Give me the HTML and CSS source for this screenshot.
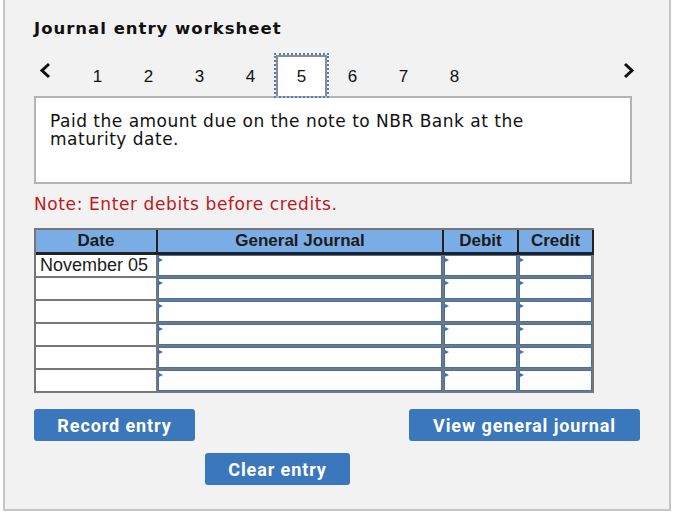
FILE: index.html
```html
<!DOCTYPE html>
<html>
<head>
    <title>Journal entry worksheet</title>
    <link rel="stylesheet" href="styles.css">
</head>
<body>
    <div class="panel">
        <h2 class="title">Journal entry worksheet</h2>

        <div class="pager">
            <span class="chevron prev">
                <svg width="12" height="17" viewBox="0 0 12 17"><polyline points="10,2 3,8.5 10,15" fill="none" stroke="#111" stroke-width="3"/></svg>
            </span>
            <span class="tab">1</span>
            <span class="tab">2</span>
            <span class="tab">3</span>
            <span class="tab">4</span>
            <span class="tab active">5</span>
            <span class="tab">6</span>
            <span class="tab">7</span>
            <span class="tab">8</span>
            <span class="chevron next">
                <svg width="12" height="17" viewBox="0 0 12 17"><polyline points="2,2 9,8.5 2,15" fill="none" stroke="#111" stroke-width="3"/></svg>
            </span>
        </div>

        <div class="description">
            Paid the amount due on the note to NBR Bank at the maturity date.
        </div>

        <p class="note">Note: Enter debits before credits.</p>

        <table class="journal">
            <colgroup>
                <col class="col-date">
                <col class="col-account">
                <col class="col-amount">
                <col class="col-amount">
            </colgroup>
            <thead>
                <tr>
                    <th>Date</th>
                    <th>General Journal</th>
                    <th>Debit</th>
                    <th>Credit</th>
                </tr>
            </thead>
            <tbody>
                <tr>
                    <td class="date">November 05</td>
                    <td><span class="field"></span></td>
                    <td><span class="field"></span></td>
                    <td><span class="field"></span></td>
                </tr>
                <tr>
                    <td class="date"></td>
                    <td><span class="field"></span></td>
                    <td><span class="field"></span></td>
                    <td><span class="field"></span></td>
                </tr>
                <tr>
                    <td class="date"></td>
                    <td><span class="field"></span></td>
                    <td><span class="field"></span></td>
                    <td><span class="field"></span></td>
                </tr>
                <tr>
                    <td class="date"></td>
                    <td><span class="field"></span></td>
                    <td><span class="field"></span></td>
                    <td><span class="field"></span></td>
                </tr>
                <tr>
                    <td class="date"></td>
                    <td><span class="field"></span></td>
                    <td><span class="field"></span></td>
                    <td><span class="field"></span></td>
                </tr>
                <tr>
                    <td class="date"></td>
                    <td><span class="field"></span></td>
                    <td><span class="field"></span></td>
                    <td><span class="field"></span></td>
                </tr>
            </tbody>
        </table>

        <div class="actions">
            <button class="btn-record">Record entry</button>
            <button class="btn-view">View general journal</button>
        </div>
        <div class="actions second">
            <button class="btn-clear">Clear entry</button>
        </div>
    </div>
</body>
</html>
```

FILE: styles.css
```css
body {
    margin: 0;
    background-color: #fff;
    font-family: "DejaVu Sans", Verdana, sans-serif;
    color: #111;
}
.panel {
    box-sizing: border-box;
    width: 668px;
    margin-left: 3px;
    padding: 20px 0 24px 29px;
    background-color: #f2f2f2;
    border: 2px solid #c6c6c6;
    border-top: none;
}
.title {
    margin: 0;
    font-size: 16.5px;
    line-height: 18px;
    font-weight: bold;
    letter-spacing: 1px;
}
.pager {
    display: flex;
    align-items: center;
    width: 598px;
    height: 41px;
    margin-top: 17px;
    font-family: "Liberation Sans", Arial, sans-serif;
    font-size: 17px;
}
.chevron {
    display: flex;
    align-self: flex-start;
    margin-top: 7px;
}
.chevron.prev {
    margin-left: 5px;
    margin-right: 21px;
}
.chevron.next {
    margin-left: auto;
    margin-right: -3px;
}
.tab {
    box-sizing: border-box;
    width: 51px;
    height: 41px;
    display: flex;
    align-items: center;
    justify-content: center;
    padding-top: 1px;
    border: 2px solid transparent;
    border-bottom: none;
}
.tab.active {
    background-color: #fff;
    border-color: #8c8c8c;
    outline: 2px dotted #4a80c8;
}
.description {
    box-sizing: border-box;
    width: 598px;
    height: 88px;
    padding: 14px 60px 0 14px;
    background-color: #fff;
    border: 2px solid #b4b4b4;
    font-size: 17px;
    line-height: 18px;
    letter-spacing: 0.5px;
}
.note {
    margin: 11px 0 0;
    color: #c0171d;
    font-size: 17px;
    line-height: 18px;
    letter-spacing: 0.6px;
}
.journal {
    margin-top: 15px;
    width: 560px;
    table-layout: fixed;
    border-collapse: separate;
    border-spacing: 0;
    border-top: 2px solid #777;
    border-left: 2px solid #777;
    font-family: "Liberation Sans", Arial, sans-serif;
    color: #1b1b1b;
}
.col-date {
    width: 122px;
}
.col-account {
    width: 286px;
}
.col-amount {
    width: 75px;
}
.journal th {
    height: 22px;
    padding: 0;
    background-color: #7aade5;
    border-right: 2px solid #222;
    border-bottom: 3px solid #222;
    font-size: 17px;
    line-height: 22px;
    font-weight: bold;
    text-align: center;
}
.journal td {
    height: 21px;
    padding: 0;
    background-color: #fff;
    border-right: 2px solid #777;
    border-bottom: 2px solid #777;
}
.journal td.date {
    padding-left: 4px;
    font-size: 18px;
    line-height: 21px;
    white-space: nowrap;
}
.field {
    position: relative;
    display: block;
    box-sizing: border-box;
    height: 21px;
    border: 1px solid #3b72b9;
    background-color: #fff;
}
.field::before {
    content: "";
    position: absolute;
    top: 2px;
    left: 0;
    border-left: 4px solid #3b72b9;
    border-top: 2.5px solid transparent;
    border-bottom: 2.5px solid transparent;
}
.actions {
    display: flex;
    justify-content: space-between;
    width: 606px;
    margin-top: 16px;
}
.actions.second {
    box-sizing: border-box;
    margin-top: 12px;
    padding-left: 171px;
}
button {
    height: 32px;
    padding: 0;
    background-color: #3b77bc;
    color: white;
    border: none;
    border-radius: 3px;
    font-family: Roboto, "Liberation Sans", sans-serif;
    font-size: 18px;
    font-weight: bold;
    letter-spacing: 0.9px;
    cursor: pointer;
}
.btn-record {
    width: 161px;
}
.btn-view {
    width: 231px;
}
.btn-clear {
    width: 145px;
}
```
